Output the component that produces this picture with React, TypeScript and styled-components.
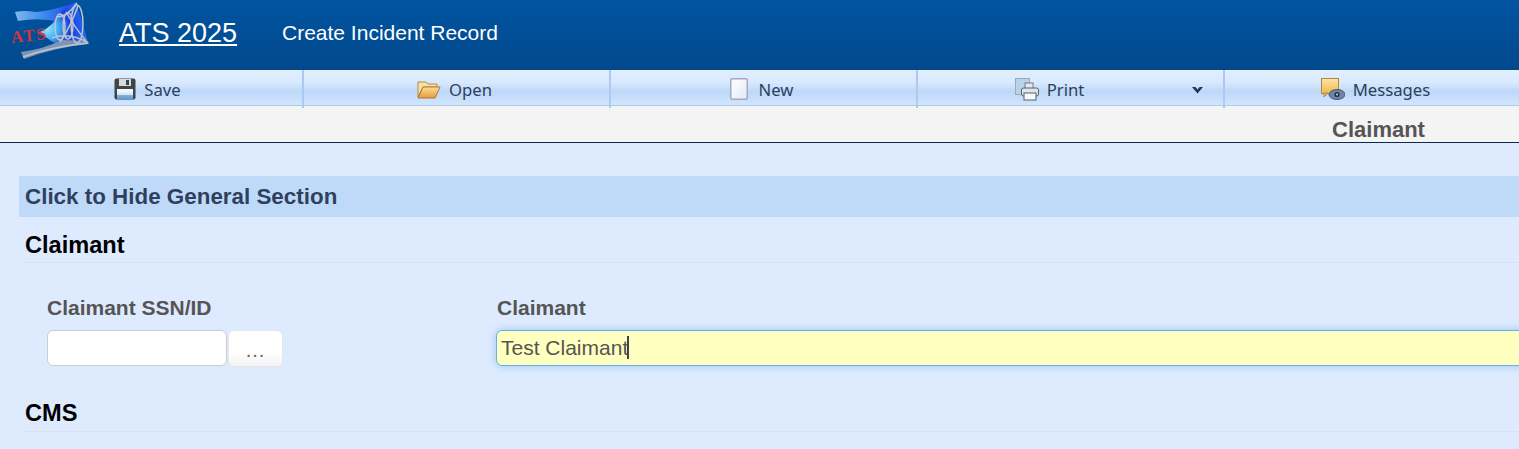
import React from "react";
import styled, { createGlobalStyle } from "styled-components";

const Global = createGlobalStyle`
  html, body { margin: 0; padding: 0; background: #deebff; overflow: hidden; }
  body { font-family: "Liberation Sans", Arial, sans-serif; }
`;
const Page = styled.div`width: 1519px; height: 449px; overflow: hidden; background: #deebff;`;
const Header = styled.header`
  height: 70px; display: flex; align-items: center;
  background: linear-gradient(to bottom, #0054a0 0%, #02498c 100%);
  color: #fff; box-sizing: border-box;
`;
const LogoWrap = styled.div`width: 119px; height: 70px; flex: none; display: flex;`;
const AppLink = styled.a`
  font-size: 27px; color: #fff; text-decoration: underline; line-height: 30px;
  width: 163px; flex: none; margin-top: -4px;
`;
const PageTitle = styled.span`font-size: 21px; line-height: 24px; margin-top: -4px;`;
const Toolbar = styled.nav`
  height: 36px; width: 1535px; display: grid; grid-template-columns: repeat(5, 307px);
  box-sizing: border-box; border-bottom: 1px solid #a9cbf2;
  background: linear-gradient(to bottom, #e3efff 0%, #d9e9fe 35%, #bdd8f9 62%, #d3e5fc 100%);
`;
const ToolItem = styled.div<{ $shift?: number; $gap?: number; $last?: boolean }>`
  position: relative; display: flex; align-items: center; justify-content: center;
  gap: ${(p) => p.$gap ?? 8}px;
  height: 35px; padding-top: 3px; padding-right: ${(p) => p.$shift ?? 12}px; box-sizing: border-box;
  font-family: "Noto Sans", Tahoma, sans-serif; font-size: 16.7px; color: #2d3f5c;
  &::after {
    content: ""; position: absolute; right: 3px; top: 0; width: 2px; height: 38px;
    background: ${(p) => (p.$last ? "transparent" : "#abc9f1")};
  }
`;
const Caret = styled.span`position: absolute; right: 25px; top: 17px; display: flex;`;
const TabStrip = styled.div`
  height: 36px; width: 1535px; display: grid; grid-template-columns: repeat(5, 307px);
  background: #f4f4f4; border-bottom: 1px solid #0d2a4d;
`;
const TabLabel = styled.div`
  grid-column: 5; text-align: center; font-size: 22px; font-weight: 700; color: #555;
  line-height: 48px; padding-right: 6px; height: 36px;
`;
const Content = styled.main`padding: 33px 0 0 19px;`;
const SectionBar = styled.div`
  height: 41px; background: #bfdaf9; color: #2f3f5e; font-size: 22.4px; font-weight: 700;
  line-height: 41px; padding-left: 6px;
`;
const GroupTitle = styled.h3<{ $pad?: number }>`
  margin: 0 0 0 6px; height: 46px; box-sizing: border-box; border-bottom: 1px solid #d9e3ee;
  font-size: 23.6px; font-weight: 700; color: #000; line-height: 25px; padding-top: ${(p) => p.$pad ?? 16}px;
`;
const FieldRow = styled.div`display: flex; padding: 33px 0 0 28px; height: 123px; box-sizing: border-box;`;
const Field = styled.div<{ $w?: number }>`
  display: flex; flex-direction: column; flex: none; width: ${(p) => p.$w ?? 450}px;
`;
const Label = styled.label`
  font-size: 21px; font-weight: 700; color: #555; line-height: 24px; margin-bottom: 10px;
`;
const InputRow = styled.div`display: flex; gap: 1px;`;
const TextBox = styled.div`
  width: 180px; height: 36px; box-sizing: border-box; background: #fff;
  border: 1px solid #ccc; border-radius: 6px;
`;
const DotsButton = styled.div`
  width: 55px; height: 37px; box-sizing: border-box; border: 1px solid #e6e6e6; border-radius: 6px;
  background: linear-gradient(to bottom, #fff 60%, #f3f3f3 100%);
  text-align: center; font-size: 20px; letter-spacing: 1px; line-height: 38px; color: #666;
`;
const FocusBox = styled.div`
  width: 1100px; height: 36px; box-sizing: border-box; background: #ffffbf;
  border: 1px solid #66afe9; border-radius: 6px; margin-left: -1px;
  box-shadow: 0 0 8px rgba(102, 175, 233, 0.6);
  font-size: 21px; color: #555; line-height: 34px; padding-left: 4px; display: flex;
`;
const TextCaret = styled.span`display: inline-block; width: 2px; height: 23px; background: #444; margin-top: 5px; margin-left: -1px;`;

const Logo = () => (
  <svg width="110" height="70" viewBox="0 0 110 70">
    <defs>
      <linearGradient id="band" x1="0" x2="1" y1="0.5" y2="0.5">
        <stop offset="0" stopColor="#7db8ec" />
        <stop offset="0.5" stopColor="#3c86ee" />
        <stop offset="1" stopColor="#1a3fe6" />
      </linearGradient>
      <radialGradient id="fan" cx="0.12" cy="0.6" r="0.85">
        <stop offset="0" stopColor="#9ee8fb" />
        <stop offset="0.28" stopColor="#45b8f6" />
        <stop offset="0.6" stopColor="#1a3ee0" />
        <stop offset="1" stopColor="#2a6cf0" />
      </radialGradient>
      <filter id="soft"><feGaussianBlur stdDeviation="0.7" /></filter>
    </defs>
    <g filter="url(#soft)">
      <path d="M15 12 Q24 10 36 12 Q56 10 76 2 L60 22 Q40 17 18 21Z" fill="url(#band)" />
      <path d="M40 32 Q54 26 60 12 L76 2 L88 42 L62 46 Q50 42 40 32Z" fill="url(#fan)" />
      <path d="M21 52 Q44 49 62 40 L88 41 L89 44 Q56 47 24 59Z" fill="#7f95b4" />
      <g fill="none" stroke="#bcc4d0" strokeWidth="1.5">
        <ellipse cx="60" cy="27" rx="5" ry="13" />
        <ellipse cx="68" cy="26" rx="5" ry="13" />
        <ellipse cx="77" cy="24" rx="6" ry="19" />
        <path d="M56 17 Q66 18 77 3 M52 38 Q68 32 87 42 M60 42 Q70 28 78 6 M66 12 Q74 26 86 41 M23 57 Q50 47 88 43" />
      </g>
      <text x="12" y="43" fontFamily="Liberation Serif, serif" fontSize="17" fontWeight="700" fill="#dd3340" letterSpacing="1.5" transform="rotate(-6 12 43)">ATS</text>
    </g>
  </svg>
);
const SaveIcon = () => (
  <svg width="22" height="22" viewBox="0 0 22 22">
    <defs><linearGradient id="sg" x1="0" x2="0" y1="0" y2="1"><stop offset="0.2" stopColor="#f4f6f8" /><stop offset="0.55" stopColor="#d5e4f2" /><stop offset="0.6" stopColor="#7fb2e0" /><stop offset="1" stopColor="#5f9ad4" /></linearGradient></defs>
    <rect x="0.5" y="0.5" width="21" height="21" rx="2" fill="#3e4448" />
    <rect x="5" y="1" width="12" height="7" fill="#d8dbde" /><rect x="12" y="2" width="3" height="5" fill="#3e4448" />
    <rect x="3" y="11" width="16" height="10" fill="url(#sg)" />
  </svg>
);
const OpenIcon = () => (
  <svg width="24" height="19" viewBox="0 0 24 19">
    <defs>
      <linearGradient id="og" x1="0" x2="0" y1="0" y2="1"><stop offset="0" stopColor="#fbdf9c" /><stop offset="1" stopColor="#e89a3c" /></linearGradient>
    </defs>
    <path d="M1 17V2h8l2 2h9v3H6L1 17Z" fill="#f7e2a8" stroke="#b98a3a" />
    <path d="M1 18l5-11h17l-5 11Z" fill="url(#og)" stroke="#b5772a" />
  </svg>
);
const NewIcon = () => (
  <svg width="18" height="22" viewBox="0 0 18 22">
    <defs><linearGradient id="ng" x1="0" x2="1" y1="0" y2="1"><stop offset="0" stopColor="#fff" /><stop offset="1" stopColor="#e3e9f3" /></linearGradient></defs>
    <rect x="0.75" y="0.75" width="16.5" height="20.5" rx="1.5" fill="url(#ng)" stroke="#a3a8c4" strokeWidth="1.5" />
  </svg>
);
const PrintIcon = () => (
  <svg width="24" height="23" viewBox="0 0 24 23">
    <rect x="0.5" y="0.5" width="14" height="16" fill="#b4d6ec" stroke="#9aa8b8" />
    <path d="M5 1v15M10 1v15M1 6h13M1 11h13" stroke="#c0ccd8" />
    <rect x="10" y="5" width="8" height="6" fill="#e4e9ee" stroke="#707a88" />
    <rect x="6.5" y="10" width="17" height="8" rx="2" fill="#dfe5ec" stroke="#56606e" />
    <rect x="9" y="15" width="12" height="7" fill="#f6f8fa" stroke="#56606e" />
  </svg>
);
const MessageIcon = () => (
  <svg width="24" height="22" viewBox="0 0 24 22">
    <defs><linearGradient id="mg" x1="0" x2="0" y1="0" y2="1"><stop offset="0" stopColor="#fbe4a6" /><stop offset="1" stopColor="#f3b94e" /></linearGradient></defs>
    <rect x="0.5" y="0.5" width="17" height="15" fill="url(#mg)" stroke="#b0884a" />
    <path d="M3 15v4l4-4Z" fill="#f3b94e" stroke="#b0884a" />
    <ellipse cx="16" cy="16.5" rx="8" ry="5" fill="#6f83a4" stroke="#4a5a78" />
    <circle cx="16" cy="16.5" r="2.6" fill="#223050" />
    <circle cx="16" cy="16.5" r="1" fill="#cfd8e6" />
  </svg>
);
const ChevronDown = () => (
  <svg width="11" height="7" viewBox="0 0 11 7"><path d="M0 0h3.4L5.5 2.4 7.6 0H11L5.5 6.5Z" fill="#1f3655" /></svg>
);

export default function App() {
  return (
    <Page>
      <Global />
      <Header>
        <LogoWrap><Logo /></LogoWrap>
        <AppLink href="#">ATS 2025</AppLink>
        <PageTitle>Create Incident Record</PageTitle>
      </Header>
      <Toolbar>
        <ToolItem><SaveIcon />Save</ToolItem>
        <ToolItem><OpenIcon />Open</ToolItem>
        <ToolItem $gap={11}><NewIcon />New</ToolItem>
        <ToolItem $shift={50}><PrintIcon />Print<Caret><ChevronDown /></Caret></ToolItem>
        <ToolItem $last><MessageIcon />Messages</ToolItem>
      </Toolbar>
      <TabStrip><TabLabel>Claimant</TabLabel></TabStrip>
      <Content>
        <SectionBar>Click to Hide General Section</SectionBar>
        <GroupTitle>Claimant</GroupTitle>
        <FieldRow>
          <Field>
            <Label>Claimant SSN/ID</Label>
            <InputRow><TextBox /><DotsButton>...</DotsButton></InputRow>
          </Field>
          <Field $w={1100}>
            <Label>Claimant</Label>
            <FocusBox>Test Claimant<TextCaret /></FocusBox>
          </Field>
        </FieldRow>
        <GroupTitle $pad={15}>CMS</GroupTitle>
      </Content>
    </Page>
  );
}
